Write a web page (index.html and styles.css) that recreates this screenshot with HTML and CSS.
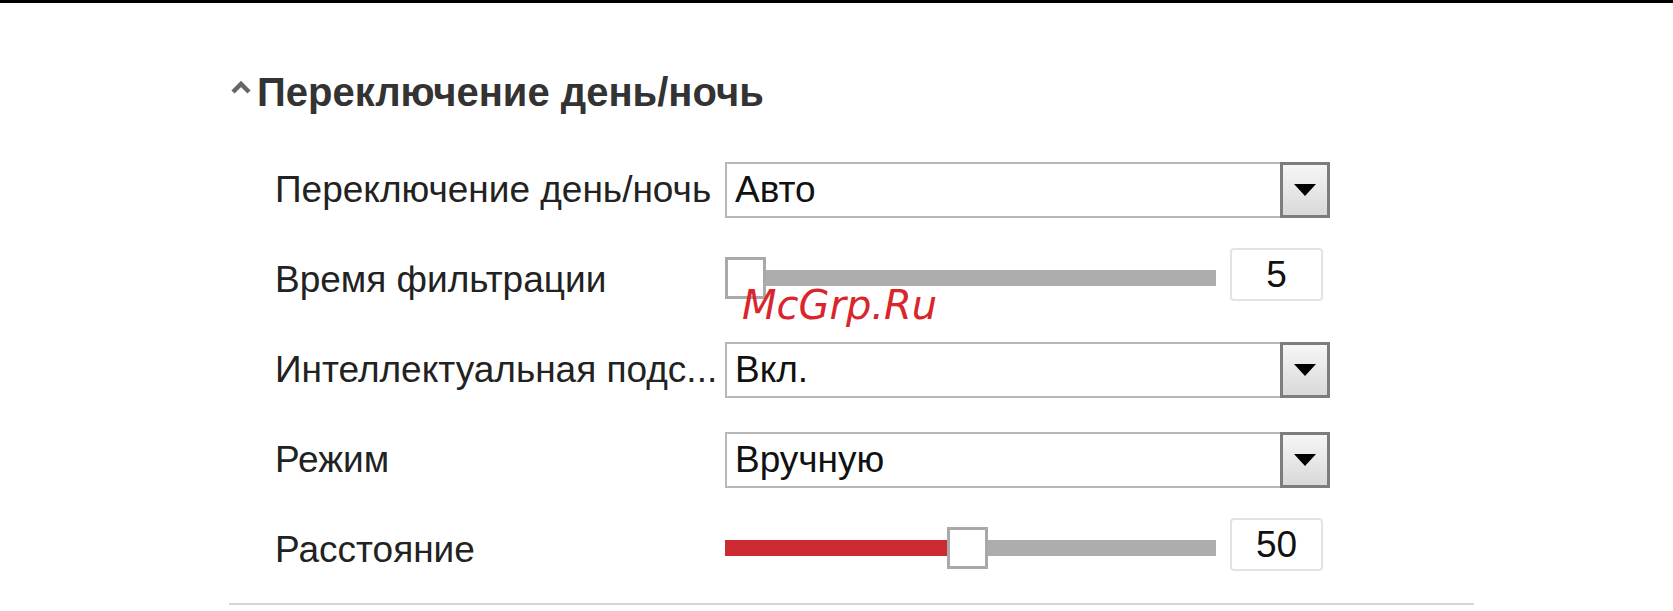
FILE: index.html
```html
<!DOCTYPE html>
<html lang="ru">
<head>
    <meta charset="UTF-8">
    <meta name="viewport" content="width=device-width, initial-scale=1.0">
    <title>Переключение день/ночь</title>
    <link rel="stylesheet" href="styles.css">
</head>
<body>

    <div class="page">

        <!-- Section header -->
        <div class="section-title">
            <svg class="caret" width="24" height="15" viewBox="0 0 24 15">
                <polyline points="4,13 12,5 20,13" fill="none" stroke="#666" stroke-width="4.5"/>
            </svg>
            <span>Переключение день/ночь</span>
        </div>

        <!-- Settings -->
        <div class="settings">
            <div class="row">
                <div class="label">Переключение день/ночь</div>
                <div class="select">
                    <span class="select-text">Авто</span>
                    <span class="select-btn"><span class="arrow"></span></span>
                </div>
            </div>

            <div class="row">
                <div class="label">Время фильтрации</div>
                <div class="slider">
                    <div class="track">
                        <div class="fill" style="width: 0%"></div>
                        <div class="thumb" style="left: 0px"></div>
                    </div>
                    <div class="value">5</div>
                </div>
            </div>

            <div class="row">
                <div class="label" title="Интеллектуальная подсветка">Интеллектуальная подс...</div>
                <div class="select">
                    <span class="select-text">Вкл.</span>
                    <span class="select-btn"><span class="arrow"></span></span>
                </div>
            </div>

            <div class="row">
                <div class="label">Режим</div>
                <div class="select">
                    <span class="select-text">Вручную</span>
                    <span class="select-btn"><span class="arrow"></span></span>
                </div>
            </div>

            <div class="row">
                <div class="label">Расстояние</div>
                <div class="slider">
                    <div class="track">
                        <div class="fill" style="width: 225px"></div>
                        <div class="thumb" style="left: 222px"></div>
                    </div>
                    <div class="value">50</div>
                </div>
            </div>
        </div>

        <div class="divider"></div>
    </div>

    <div class="watermark">McGrp.Ru</div>

</body>
</html>
```

FILE: styles.css
```css
body {
    margin: 0;
    font-family: "Liberation Sans", Arial, sans-serif;
    color: #222;
    background: #fff;
    border-top: 3px solid #000;
    overflow: hidden;
}
.page {
    padding-left: 229px;
    width: 1245px;
}
.section-title {
    display: flex;
    align-items: center;
    gap: 4px;
    height: 50px;
    margin-top: 64px;
    font-size: 40px;
    font-weight: bold;
    color: #333;
}
.caret {
    margin-top: -12px;
}
.settings {
    margin-top: 28px;
    padding-left: 46px;
}
.row {
    display: flex;
    align-items: center;
    height: 90px;
}
.label {
    width: 450px;
    font-size: 37px;
    white-space: nowrap;
}
.select {
    display: flex;
    align-items: stretch;
    width: 605px;
    height: 56px;
    box-sizing: border-box;
    border: 2px solid #b8b8b8;
    background: #fff;
}
.select-text {
    flex: 1;
    display: flex;
    align-items: center;
    padding-left: 8px;
    font-size: 37px;
    color: #111;
}
.select-btn {
    width: 50px;
    box-sizing: border-box;
    border: 3px solid #7d7d7d;
    margin: -2px -2px -2px 0;
    background: linear-gradient(#f6f6f6, #d9d9d9);
    display: flex;
    align-items: center;
    justify-content: center;
}
.arrow {
    width: 0;
    height: 0;
    border-left: 11px solid transparent;
    border-right: 11px solid transparent;
    border-top: 12px solid #000;
}
.slider {
    display: flex;
    align-items: center;
    gap: 14px;
    margin-top: -4px;
}
.track {
    position: relative;
    width: 491px;
    height: 16px;
    background: #adadad;
}
.fill {
    height: 100%;
    background: #cc2b33;
}
.thumb {
    position: absolute;
    top: -13px;
    width: 41px;
    height: 42px;
    box-sizing: border-box;
    border: 3px solid #a9a9a9;
    background: #fff;
}
.value {
    width: 93px;
    height: 53px;
    margin-bottom: 7px;
    box-sizing: border-box;
    border: 2px solid #e0e3e8;
    border-radius: 4px;
    display: flex;
    align-items: center;
    justify-content: center;
    font-size: 37px;
    color: #111;
}
.divider {
    height: 2px;
    margin-top: 8px;
    background: #d6d6d6;
}
.watermark {
    position: absolute;
    left: 742px;
    top: 285px;
    font-family: "DejaVu Sans", sans-serif;
    font-style: italic;
    font-size: 40px;
    line-height: 40px;
    color: #d9262c;
}
```
